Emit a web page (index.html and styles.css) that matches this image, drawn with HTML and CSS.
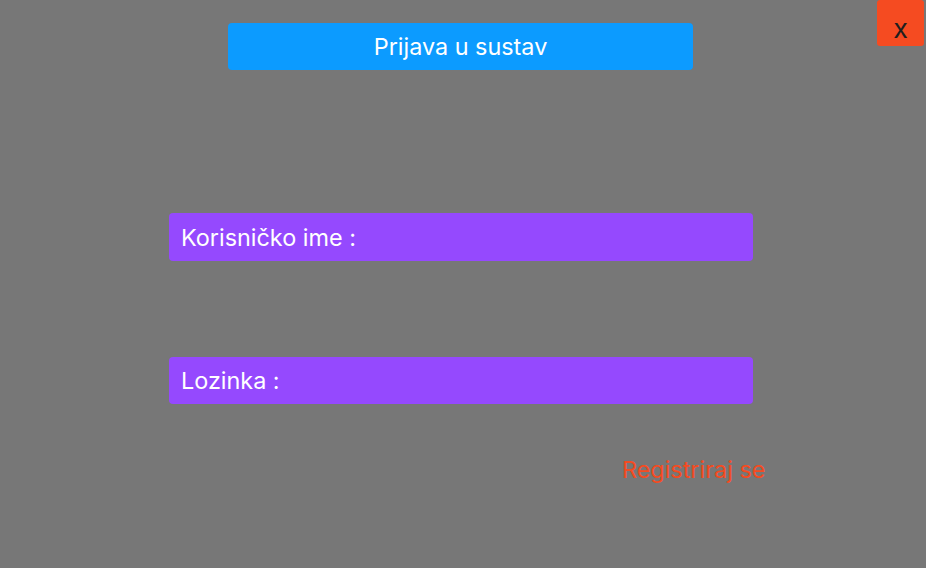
FILE: index.html
```html
<!DOCTYPE html>
<html lang="hr">
<head>
<meta charset="utf-8">
<title>Prijava u sustav</title>
<link rel="stylesheet" href="styles.css">
</head>
<body>
<div class="screen">
  <button class="close">x</button>
  <div class="title">Prijava u sustav</div>
  <div class="field field-user">Korisničko ime :</div>
  <div class="field field-pass">Lozinka :</div>
  <div class="register">Registriraj se</div>
</div>
</body>
</html>
```
FILE: styles.css
```css
html, body {
  margin: 0;
  padding: 0;
  background: #777777;
}
.screen {
  position: relative;
  width: 926px;
  height: 568px;
  display: flex;
  flex-direction: column;
  align-items: flex-start;
  font-family: Inter, "Noto Sans", sans-serif;
  color: #ffffff;
  box-sizing: border-box;
}
.close {
  position: absolute;
  top: 0;
  right: 2px;
  width: 47px;
  height: 46px;
  border: none;
  border-radius: 3px;
  background: #f54b21;
  color: #1e1e1e;
  font-family: Inter, sans-serif;
  font-size: 27px;
  padding: 10px 0 0 0;
  line-height: 1;
}
.title {
  margin: 23px 0 0 228px;
  width: 465px;
  height: 47px;
  background: #0c9bff;
  border-radius: 4px;
  display: flex;
  align-items: center;
  justify-content: center;
  font-size: 23.4px;
}
.field {
  margin-left: 169px;
  width: 584px;
  height: 48px;
  background: #9549fe;
  border-radius: 4px;
  display: flex;
  align-items: center;
  padding-left: 12px;
  box-sizing: border-box;
  font-size: 23.4px;
}
.field-user {
  margin-top: 143px;
}
.field-pass {
  margin-top: 96px;
  height: 47px;
}
.register {
  margin: 52px 0 0 622px;
  color: #f54b21;
  font-size: 23.4px;
  line-height: 28px;
}
```
